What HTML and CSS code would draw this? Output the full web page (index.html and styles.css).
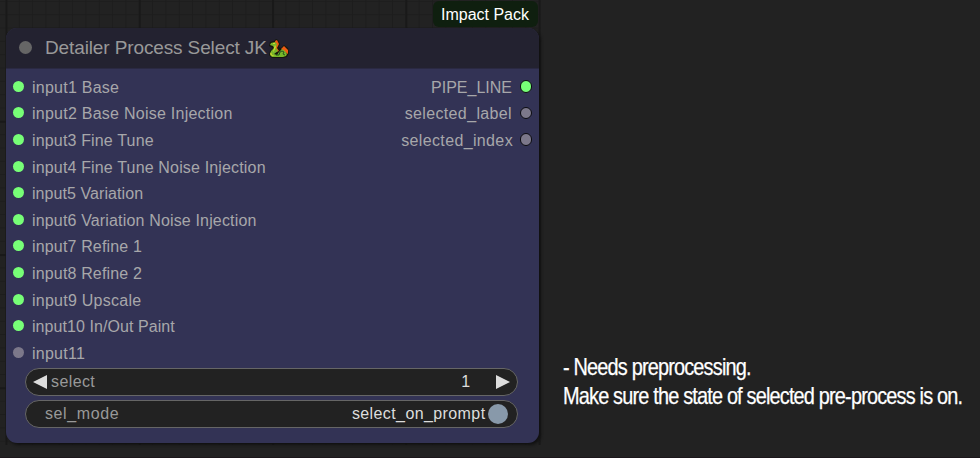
FILE: index.html
```
<!DOCTYPE html>
<html lang="en">
<head>
<meta charset="utf-8">
<title>Detailer Process Select</title>
<link rel="stylesheet" href="styles.css">
</head>
<body>
<main class="workspace">
  <section class="canvas">
    <div class="badge"><span>Impact Pack</span></div>
    <article class="node">
      <header class="node-header">
        <i class="collapse"></i>
        <h1>Detailer Process Select JK</h1>
        <svg class="dragon" viewBox="0 0 22 22">
          <path d="M2 4 6 3l2-2 2 1 2 4-1 3 2 1 3-3 4 3 1 5-2 4-4 1H4l-3-3 1-4 3-3-4-2z" fill="#15170b"/>
          <path d="M7 3l2-1 2 4-2 4 2 3-3 1zM13 11l3-3 4 4v4l-3-2z" fill="#ef5b13"/>
          <path d="M3 5l4-1 2 2-1 4 2 3-4 3 3 1 2-3 3-3 3 2 2 3-1 2-3 1H4l-2-2 1-4 3-3-1-2-3-1z" fill="#77b629"/>
          <path d="M3 14l1 3 3 1H4l-2-2zM5 5h2v1H5zM7 7l1 2-2 4-1 1 1-4z" fill="#d5d82e"/>
          <path d="M8 17h3l1-3 2-1 2 1-1 2 2 1" fill="none" stroke="#24571d"/>
        </svg>
      </header>
      <div class="slots">
        <ul class="inputs">
          <li><i class="dot on"></i><span>input1 Base</span></li>
          <li><i class="dot on"></i><span>input2 Base Noise Injection</span></li>
          <li><i class="dot on"></i><span class="snug">input3 Fine Tune</span></li>
          <li><i class="dot on"></i><span class="snug">input4 Fine Tune Noise Injection</span></li>
          <li><i class="dot on"></i><span class="tight">input5 Variation</span></li>
          <li><i class="dot on"></i><span class="snug">input6 Variation Noise Injection</span></li>
          <li><i class="dot on"></i><span class="snug">input7 Refine 1</span></li>
          <li><i class="dot on"></i><span class="snug">input8 Refine 2</span></li>
          <li><i class="dot on"></i><span>input9 Upscale</span></li>
          <li><i class="dot on"></i><span class="tight">input10 In/Out Paint</span></li>
          <li><i class="dot"></i><span>input11</span></li>
        </ul>
        <ul class="outputs">
          <li><span class="pipe">PIPE_LINE</span><i class="dot on"></i></li>
          <li><span class="label">selected_label</span><i class="dot"></i></li>
          <li><span class="index">selected_index</span><i class="dot"></i></li>
        </ul>
      </div>
      <div class="widgets">
        <div class="widget">
          <svg class="arrow" viewBox="0 0 14 14"><path d="M0 7 14 0v14z"/></svg>
          <span class="name">select</span>
          <span class="value number">1</span>
          <svg class="arrow" viewBox="0 0 14 14"><path d="M14 7 0 0v14z"/></svg>
        </div>
        <div class="widget toggle">
          <span class="name">sel_mode</span>
          <span class="value">select_on_prompt</span>
          <i class="knob"></i>
        </div>
      </div>
    </article>
  </section>
  <aside class="notes">
    <p>- Needs preprocessing.</p>
    <p>Make sure the state of selected pre-process is on.</p>
  </aside>
</main>
</body>
</html>
```

FILE: styles.css
```
* { box-sizing: border-box; }
body {
  margin: 0;
  background: #222;
  font-family: "Liberation Sans", Arial, sans-serif;
  font-size: 16px;
  color: #a7a7aa;
}
h1, ul, p { margin: 0; padding: 0; font-weight: 400; }
ul { list-style: none; }
i, svg { flex: none; display: block; }
.workspace {
  display: flex;
  height: 458px;
  overflow: hidden;
  border-bottom: 1px solid #1c171b;
}
.canvas {
  flex: none;
  width: 541px;
  height: 445px;
  padding: 1px 2px 2px 5.5px;
  background-color: #222;
  background-image:
    linear-gradient(90deg, #191919 2px, transparent 2px),
    linear-gradient(#191919 2px, transparent 2px),
    linear-gradient(90deg, #1d1d1d 1.4px, transparent 1.4px),
    linear-gradient(#1d1d1d 1.4px, transparent 1.4px);
  background-size: 133.3px 133.3px, 133.3px 133.3px, 13.33px 13.33px, 13.33px 13.33px;
  background-position: 5.5px 0, 0 -12.5px, 5.5px 0, 0 .9px;
}
.badge {
  width: 105px;
  height: 26px;
  margin: 0 1px 1px auto;
  border-radius: 6px;
  background: #0f1f0f;
  color: #fff;
  line-height: 27px;
  text-align: center;
  text-indent: -1px;
  white-space: nowrap;
}
.node {
  width: 533.5px;
  height: 415px;
  border-radius: 11px;
  background: #335;
  box-shadow: 2px 2px 3px #111;
  overflow: hidden;
}
.node-header {
  display: flex;
  align-items: center;
  height: 41px;
  padding-left: 13.5px;
  background: #232230;
  border-bottom: 1px solid #2a2942;
  color: #999;
}
.collapse {
  width: 13px;
  height: 13px;
  margin: -1px 13px 0 0;
  border-radius: 50%;
  background: #666;
}
h1 { width: 223px; font-size: 19px; line-height: 40px; letter-spacing: -.12px; white-space: nowrap; }
.dragon { width: 22px; height: 22px; margin-top: 1px; }
.slots { display: flex; justify-content: space-between; height: 299px; padding: 4px 7px 0 7.5px; }
.slots li { display: flex; align-items: center; height: 26.6px; white-space: nowrap; }
.slots li span { position: relative; top: 1.6px; letter-spacing: .25px; }
.slots li .snug { letter-spacing: .16px; }
.slots li .tight { letter-spacing: .07px; }
.dot { width: 11px; height: 11px; border-radius: 50%; background: #7c788a; }
.dot.on { background: #7f7; }
.inputs .dot { margin-right: 8px; }
.outputs li { justify-content: flex-end; }
.outputs .dot { width: 12.5px; height: 12.5px; margin-left: 6.5px; border: 1.6px solid #0b0b10; }
.outputs .pipe, .outputs .label { margin-right: 1px; }
.slots li .pipe { letter-spacing: 0; }
.slots li .label, .slots li .index { letter-spacing: .36px; }
.widgets { display: grid; gap: 4px; padding: 0 21.5px 0 19.5px; }
.widget {
  display: flex;
  align-items: center;
  height: 28px;
  padding: 0 7px 0 7px;
  border: 1.4px solid #666;
  border-radius: 14px;
  background: #222;
  color: #999;
  white-space: nowrap;
  letter-spacing: .4px;
}
.arrow { width: 14px; height: 14px; fill: #ddd; }
.arrow + .name { margin-left: 4px; }
.value { margin-left: auto; color: #ddd; }
.number { margin-right: 25px; }
.toggle { padding: 0 9px 0 19px; }
.toggle .name { letter-spacing: .6px; }
.knob { width: 20px; height: 20px; margin-left: 2px; border-radius: 50%; background: #89a; }
.notes { padding: 352px 0 0 22px; color: #fff; font-size: 24px; line-height: 29px; white-space: nowrap; }
.notes p { width: 480px; transform: scaleX(.83); transform-origin: left; letter-spacing: -1px; -webkit-text-stroke: .25px #fff; }
```
